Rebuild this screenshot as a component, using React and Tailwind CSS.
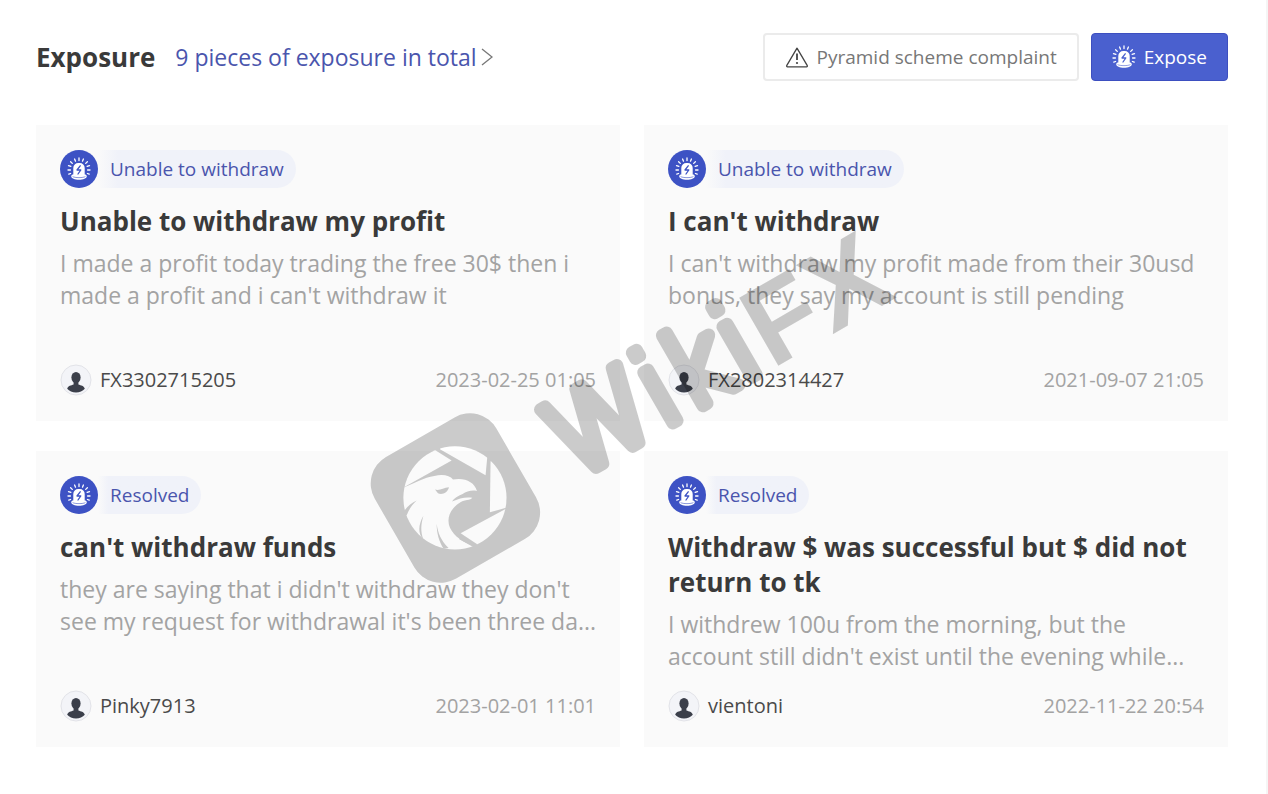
import React from 'react';

const exposures = [
  {
    id: 1,
    tag: 'Unable to withdraw',
    title: 'Unable to withdraw my profit',
    text: "I made a profit today trading the free 30$ then i made a profit and i can't withdraw it",
    user: 'FX3302715205',
    date: '2023-02-25 01:05',
  },
  {
    id: 2,
    tag: 'Unable to withdraw',
    title: "I can't withdraw",
    text: "I can't withdraw my profit made from their 30usd bonus, they say my account is still pending",
    user: 'FX2802314427',
    date: '2021-09-07 21:05',
  },
  {
    id: 3,
    tag: 'Resolved',
    title: "can't withdraw funds",
    text: "they are saying that i didn't withdraw they don't see my request for withdrawal it's been three da...",
    user: 'Pinky7913',
    date: '2023-02-01 11:01',
  },
  {
    id: 4,
    tag: 'Resolved',
    title: 'Withdraw $ was successful but $ did not return to tk',
    text: "I withdrew 100u from the morning, but the account still didn't exist until the evening while...",
    user: 'vientoni',
    date: '2022-11-22 20:54',
  },
];

// Siren lamp with rays, used on the button and on every tag
const SirenIcon = ({ className, bolt }) => (
  <svg viewBox="0 0 24 24" className={className} fill="none" aria-hidden="true">
    <g stroke="currentColor" strokeWidth="1.3" strokeLinecap="round">
      <path d="M12 1v2.6M7.6 2l.9 2.2M16.4 2l-.9 2.2M3.6 4.8l1.7 1.6M20.4 4.8l-1.7 1.6M1.5 8.6l2.4.8M22.5 8.6l-2.4.8M1 13h2.4M23 13h-2.4M1.8 17.2l1.8-.7M22.2 17.2l-1.8-.7" />
    </g>
    <path d="M6.3 19v-8a5 5 0 0 1 5-5h1.4a5 5 0 0 1 5 5v8z" fill="currentColor" />
    <path d="M4.2 19.2c0-1 1-1.6 2.1-1.6h11.4c1.1 0 2.1.6 2.1 1.6 0 2.2-3.6 3.6-7.8 3.6s-7.8-1.4-7.8-3.6z" fill="currentColor" />
    <path d="M5.6 19.5c2 1.5 10.8 1.5 12.8 0" stroke={bolt} strokeWidth=".6" />
    <path d="M13.2 8.8l-3.2 4.2h3.8l-2.8 4" stroke={bolt} strokeWidth="1.3" strokeLinejoin="round" strokeLinecap="round" />
  </svg>
);

const WarningIcon = () => (
  <svg viewBox="0 0 24 24" className="w-6 h-6 text-[#444]" fill="none" aria-hidden="true">
    <path d="M12 3.2L22.3 20.7a.8.8 0 0 1-.7 1.1H2.4a.8.8 0 0 1-.7-1.1z" stroke="currentColor" strokeWidth="1.3" strokeLinejoin="round" />
    <path d="M12 8.5v6.5" stroke="currentColor" strokeWidth="1.8" />
    <circle cx="12" cy="18" r="1.1" fill="currentColor" />
  </svg>
);

const Avatar = () => (
  <svg viewBox="0 0 32 32" className="w-8 h-8 shrink-0" aria-hidden="true">
    <circle cx="16" cy="16" r="15" fill="#f3f4f8" stroke="#e2e3e8" />
    <ellipse cx="16" cy="13.5" rx="4.6" ry="5.6" fill="#3b3f4a" />
    <path d="M13.6 17h4.8v3.6c2.5 1 5.6 1.2 6.4 4.2-2 2.4-5.2 3.8-8.8 3.8s-6.8-1.4-8.8-3.8c.8-3 3.9-3.2 6.4-4.2z" fill="#3b3f4a" />
  </svg>
);

const ExposureCard = ({ item }) => (
  <article className="flex flex-col min-h-74 px-6 py-[25px] bg-[#fafafa]">
    <div className="flex self-start items-center">
      <span className="flex items-center justify-center w-[38px] h-[38px] rounded-full bg-[#3d52c4] text-white">
        <SirenIcon className="w-6 h-6" bolt="#3d52c4" />
      </span>
      <span className="flex items-center h-[38px] px-3 rounded-r-full bg-linear-to-r from-[#fafafa] via-[#f0f2f9] via-10% to-[#f0f2f9] text-[19px] text-[#4a55ad]">
        {item.tag}
      </span>
    </div>
    <h2 className="mt-4 text-[26px] leading-[35px] font-bold text-[#3a3a3a]">{item.title}</h2>
    <p className="mt-2 -mr-1 text-[23px] leading-8 text-[#a3a3a3]">{item.text}</p>
    <footer className="flex items-center justify-between mt-auto">
      <div className="flex items-center gap-2">
        <Avatar />
        <span className="text-xl text-[#4a4a4a]">{item.user}</span>
      </div>
      <time className="text-xl text-[#a3a3a3]">{item.date}</time>
    </footer>
  </article>
);

// Brand stamp laid diagonally over the cards
const Watermark = () => (
  <svg viewBox="0 0 1268 794" className="absolute top-0 left-0 w-full pointer-events-none opacity-20">
    <defs>
      <clipPath id="lens">
        <circle cx="287" cy="296" r="155" />
      </clipPath>
      <mask id="eagle" maskUnits="userSpaceOnUse" x="0" y="0" width="600" height="600">
        <rect width="600" height="600" fill="white" />
        <g clipPath="url(#lens)" fill="black">
          <path d="M120 272L120 130L228 153L277 184z" />
          <path d="M242 150L250 120L384 130V174L379 228z" />
          <path d="M394 186L470 186V318L392 339z" />
          <path d="M304 402L442 328V450H354z" />
          <path d="M100 276C150 262 185 236 225 230C250 224 272 228 281 241C315 234 346 248 353 275C338 271 322 276 310 284C296 290 284 296 278 307C300 297 322 292 339 296C335 304 314 301 299 312C268 334 262 362 272 386C284 412 312 430 345 441L340 480H100z" />
        </g>
        <path d="M227 271C241 276 252 265 269 264C266 281 247 288 236 282z" fill="white" />
        <path d="M131 342C139 326 152 314 172 304C158 317 149 330 142 348z" fill="white" />
        <path d="M192 350C185 376 183 396 192 421C175 403 177 377 192 350z" fill="white" />
        <path d="M232 374C236 403 245 424 268 447L253 449C239 427 232 402 232 374z" fill="white" />
        <path d="M304 402L354 435L346 446L300 420z" fill="white" />
      </mask>
    </defs>
    <g transform="translate(360 400) scale(.33333)">
      <g mask="url(#eagle)">
        <rect x="77" y="86" width="422" height="422" rx="92" transform="rotate(-30 287 296)" />
      </g>
    </g>
    <g transform="translate(572 486) rotate(-30)">
      <text x="4" y="-3" fontSize="107" stroke="black" strokeWidth="13" strokeLinejoin="round" className="font-['DejaVu_Sans'] font-extralight">
        Wiki
      </text>
      <text x="232" y="0" fontSize="114" className="font-['Liberation_Sans'] font-bold">
        FX
      </text>
    </g>
  </svg>
);

function App() {
  return (
    <div className="relative min-h-screen bg-white border-r-2 border-[#f5f5f5] font-['Open_Sans','Noto_Sans',sans-serif]">
      <main className="pl-9 pr-[38px] pt-[33px] pb-12">
        <header className="flex items-center justify-between">
          <div className="flex items-center gap-5">
            <h1 className="text-[26px] leading-8 font-bold text-[#3a3a3a]">Exposure</h1>
            <a href="#all" className="flex items-center gap-1 text-[23px] leading-8 text-[#4a55ad]">
              9 pieces of exposure in total
              <svg viewBox="0 0 12 20" className="w-3 h-5" fill="none" aria-hidden="true">
                <path d="M1 2l10 8-10 8" stroke="#777" strokeWidth="1.3" />
              </svg>
            </a>
          </div>
          <div className="flex items-center gap-3">
            <button className="flex items-center gap-2 h-12 px-5 border-2 border-[#ebebeb] rounded-sm text-[19px] text-[#777]">
              <WarningIcon />
              Pyramid scheme complaint
            </button>
            <button className="flex items-center gap-2 h-12 px-5 border border-[#3d4fc0] rounded-sm bg-[#4a60cf] text-[19px] text-white">
              <SirenIcon className="w-6 h-6" bolt="#4a60cf" />
              Expose
            </button>
          </div>
        </header>
        <section className="grid grid-cols-2 gap-x-6 gap-y-[30px] mt-11">
          {exposures.map((item) => (
            <ExposureCard key={item.id} item={item} />
          ))}
        </section>
      </main>
      <Watermark />
    </div>
  );
}

export default App;
